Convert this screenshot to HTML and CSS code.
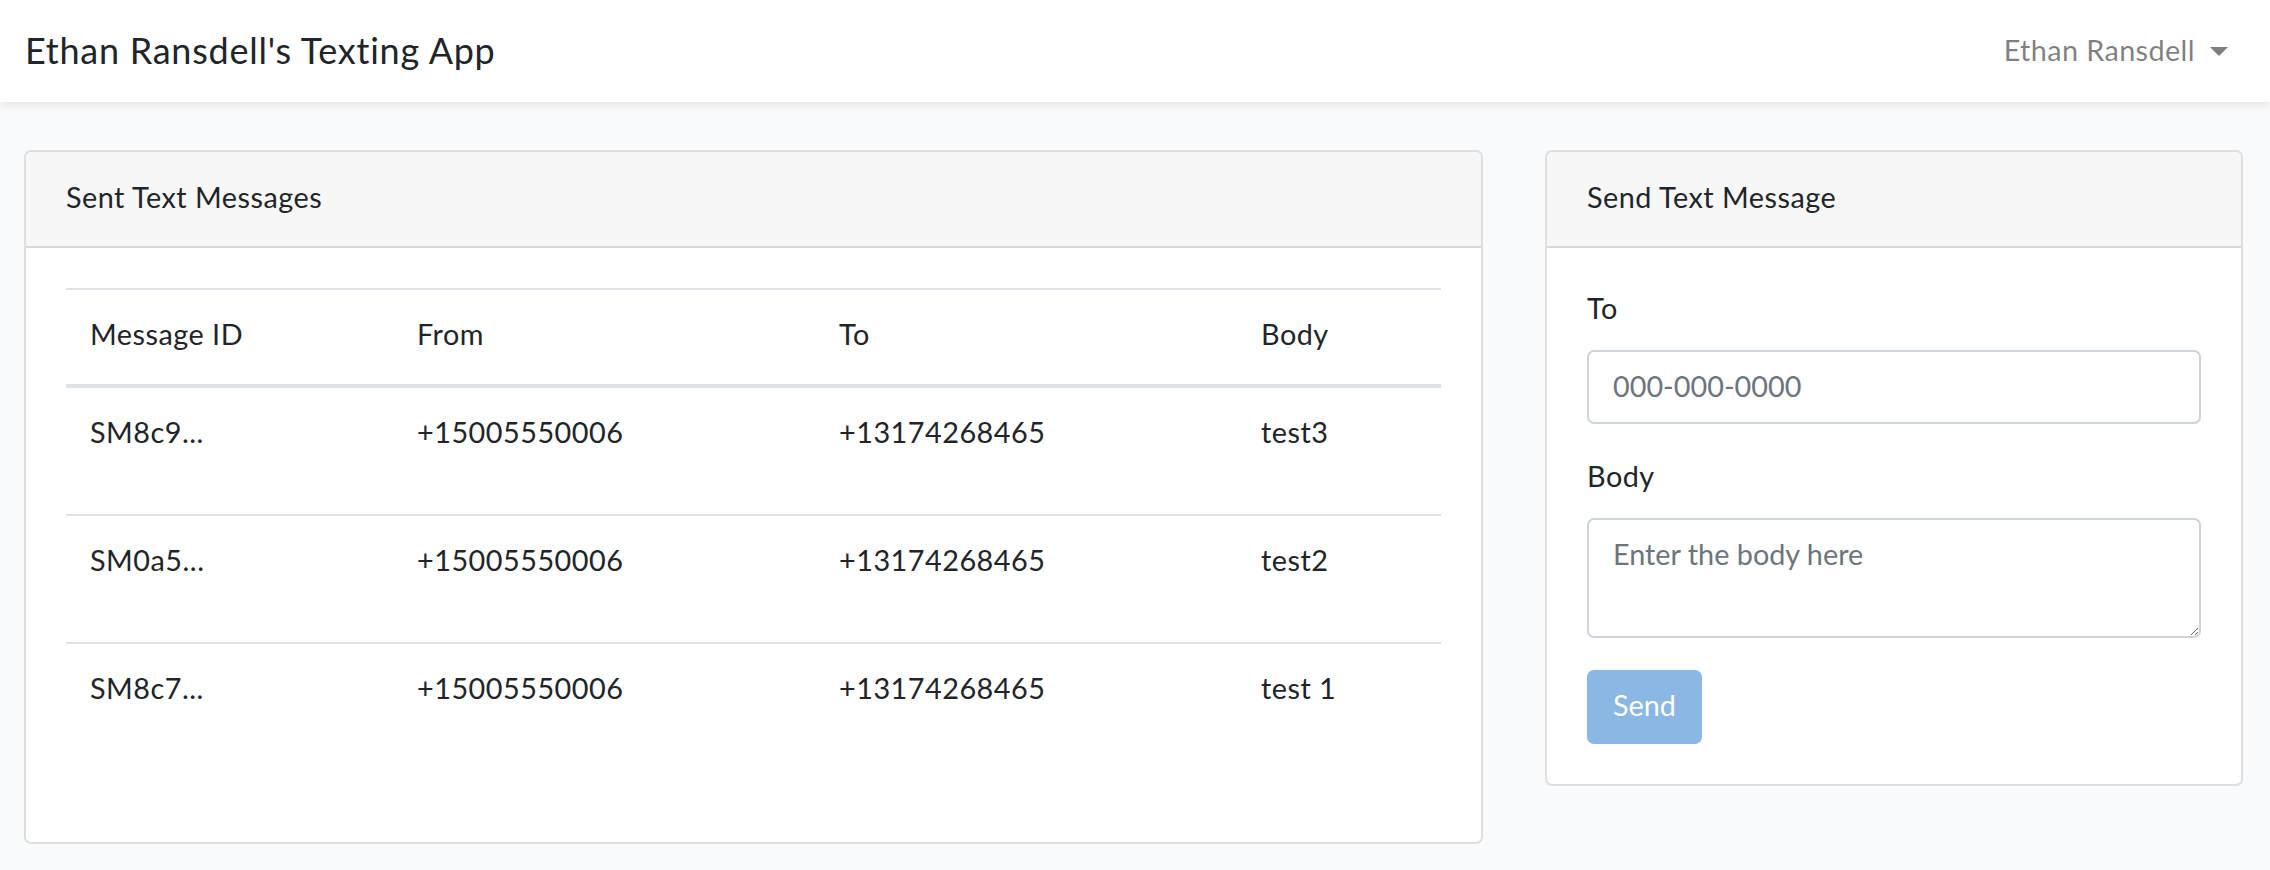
FILE: index.html
```html
<!DOCTYPE html>
<html lang="en">
<head>
<meta charset="utf-8">
<title>Ethan Ransdell's Texting App</title>
<link rel="stylesheet" href="styles.css">
</head>
<body>
<nav class="navbar">
  <a class="brand" href="#">Ethan Ransdell's Texting App</a>
  <a class="user" href="#">Ethan Ransdell<span class="caret"></span></a>
</nav>
<main class="main">
  <section class="card card-list">
    <div class="card-header">Sent Text Messages</div>
    <div class="card-body">
      <table class="table">
        <colgroup>
          <col class="c-id"><col class="c-from"><col class="c-to"><col class="c-body">
        </colgroup>
        <thead>
          <tr><th>Message ID</th><th>From</th><th>To</th><th>Body</th></tr>
        </thead>
        <tbody>
          <tr><td>SM8c9...</td><td>+15005550006</td><td>+13174268465</td><td><p>test3</p></td></tr>
          <tr><td>SM0a5...</td><td>+15005550006</td><td>+13174268465</td><td><p>test2</p></td></tr>
          <tr><td>SM8c7...</td><td>+15005550006</td><td>+13174268465</td><td><p>test 1</p></td></tr>
        </tbody>
      </table>
    </div>
  </section>
  <section class="card card-form">
    <div class="card-header">Send Text Message</div>
    <div class="card-body">
      <form>
        <div class="form-group">
          <label for="to">To</label>
          <input id="to" class="form-control" type="text" placeholder="000-000-0000">
        </div>
        <div class="form-group">
          <label for="body">Body</label>
          <textarea id="body" class="form-control textarea" rows="2" placeholder="Enter the body here"></textarea>
        </div>
        <button type="button" class="btn" disabled>Send</button>
      </form>
    </div>
  </section>
</main>
</body>
</html>
```
FILE: styles.css
```css
* { box-sizing: border-box; }
html, body { margin: 0; padding: 0; }
body {
  font-family: Lato, "Noto Sans", sans-serif;
  font-size: 28.8px;
  line-height: 1.6;
  letter-spacing: 0.5px;
  color: #212529;
  background: #f8fafc;
  width: 2270px;
  height: 870px;
  overflow: hidden;
}
a { text-decoration: none; }
.navbar {
  height: 102px;
  background: #fff;
  box-shadow: 0 4px 8px rgba(0,0,0,.075);
  display: flex;
  align-items: center;
  justify-content: space-between;
  padding: 0 42px 0 25px;
  position: relative;
  z-index: 1;
}
.brand { font-size: 36px; color: #212529; line-height: 1; letter-spacing: 0.75px; margin-top: -2px; }
.user { color: rgba(0,0,0,.5); display: flex; align-items: center; letter-spacing: 0.4px; margin-top: -2px; }
.caret {
  display: inline-block;
  margin-left: 15px;
  border-top: 9px solid rgba(0,0,0,.5);
  border-left: 9px solid transparent;
  border-right: 9px solid transparent;
  margin-top: 2px;
}
.main {
  display: flex;
  align-items: flex-start;
  gap: 62px;
  padding: 48px 27px 0 24px;
}
.card {
  background: #fff;
  border: 2px solid rgba(0,0,0,.125);
  border-radius: 7px;
  overflow: hidden;
}
.card-list { width: 1459px; }
.card-form { width: 698px; }
.card-header {
  background: rgba(0,0,0,.03);
  border-bottom: 2px solid rgba(0,0,0,.125);
  padding: 22px 40px 26px;
}
.card-body { padding: 40px; }
.table {
  width: 100%;
  border-collapse: collapse;
  table-layout: fixed;
  margin-bottom: 32px;
}
.c-id { width: 327px; }
.c-from { width: 422px; }
.c-to { width: 422px; }
.c-body { width: 204px; }
.table th, .table td {
  text-align: left;
  font-weight: 400;
  padding: 21px 24px 27px;
  vertical-align: top;
  border-top: 2px solid #dee2e6;
}
.table th { border-bottom: 4px solid #dee2e6; }
.table td p { margin: 0 0 32px; }
.form-group { margin-bottom: 32px; }
label { display: block; margin-bottom: 16px; position: relative; top: -3px; }
.form-control {
  display: block;
  width: 100%;
  height: 74px;
  padding: 11px 24px 13px;
  font: inherit;
  color: #495057;
  background: #fff;
  border: 2px solid #ced4da;
  border-radius: 7px;
}
.form-control::placeholder { color: #6c757d; opacity: 1; }
.textarea { height: 120px; resize: vertical; }
.btn {
  font: inherit;
  color: #fff;
  background: #8bb7e5;
  border: 2px solid #8bb7e5;
  border-radius: 7px;
  padding: 10px 24px 14px;
  height: 74px;
  line-height: 46px;
  display: inline-flex;
  align-items: center;
}
```
